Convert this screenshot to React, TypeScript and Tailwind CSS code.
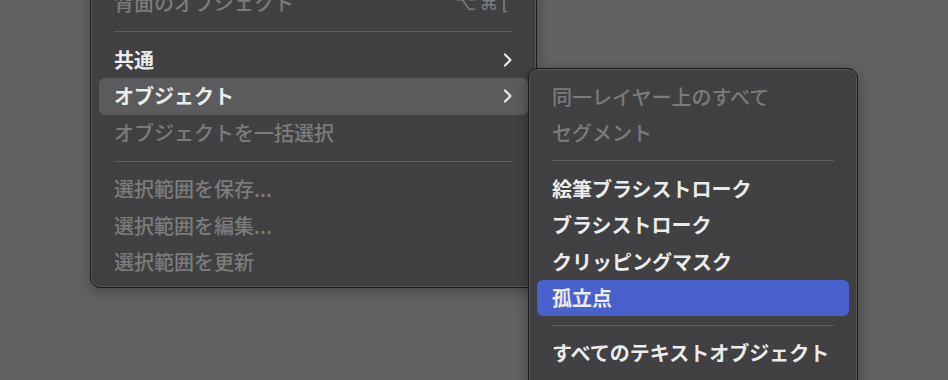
type Item =
  | { kind: "sep"; h?: string }
  | {
      kind: "item";
      label: string;
      disabled?: boolean;
      submenu?: boolean;
      shortcut?: string;
      active?: "gray" | "blue";
    };

const mainItems: Item[] = [
  { kind: "item", label: "背面のオブジェクト", disabled: true, shortcut: "⌥⌘[" },
  { kind: "sep" },
  { kind: "item", label: "共通", submenu: true },
  { kind: "item", label: "オブジェクト", submenu: true, active: "gray" },
  { kind: "item", label: "オブジェクトを一括選択", disabled: true },
  { kind: "sep" },
  { kind: "item", label: "選択範囲を保存...", disabled: true },
  { kind: "item", label: "選択範囲を編集...", disabled: true },
  { kind: "item", label: "選択範囲を更新", disabled: true },
];

const subItems: Item[] = [
  { kind: "item", label: "同一レイヤー上のすべて", disabled: true },
  { kind: "item", label: "セグメント", disabled: true },
  { kind: "sep", h: "h-[19px]" },
  { kind: "item", label: "絵筆ブラシストローク" },
  { kind: "item", label: "ブラシストローク" },
  { kind: "item", label: "クリッピングマスク" },
  { kind: "item", label: "孤立点", active: "blue" },
  { kind: "sep", h: "h-[18.5px]" },
  { kind: "item", label: "すべてのテキストオブジェクト" },
  { kind: "item", label: "ポイント文字オブジェクト" },
];

function Chevron() {
  return (
    <svg width="12" height="14" viewBox="0 0 12 14" className="shrink-0">
      <path
        d="M3 1.5 L8.5 7 L3 12.5"
        fill="none"
        stroke="#e6e6e6"
        strokeWidth="2.2"
        strokeLinecap="round"
        strokeLinejoin="round"
      />
    </svg>
  );
}

function Row({ item }: { item: Item }) {
  if (item.kind === "sep") {
    return (
      <div className={`flex items-center px-[15px] ${item.h ?? "h-[20px]"}`}>
        <div className="h-px w-full bg-[#5d5d5f]" />
      </div>
    );
  }
  const bg =
    item.active === "gray"
      ? "bg-[#5b5b5d]"
      : item.active === "blue"
        ? "bg-[#4a61cc]"
        : "";
  return (
    <div
      className={`flex h-[36.5px] items-center justify-between rounded-[6px] pl-[15px] pr-[14px] ${bg}`}
    >
      <span
        className={`whitespace-nowrap text-[20px] leading-none ${
          item.disabled ? "font-medium text-[#7b7b7c]" : "font-semibold text-[#ebebeb]"
        }`}
      >
        {item.label}
      </span>
      {item.submenu && <Chevron />}
      {item.shortcut && (
        <span className="whitespace-nowrap pr-[2px] text-[19px] leading-none tracking-[3px] text-[#7b7b7c] [font-family:'DejaVu_Sans',sans-serif]">
          {item.shortcut}
        </span>
      )}
    </div>
  );
}

export default function App() {
  return (
    <div className="relative h-[380px] w-[948px] overflow-hidden bg-[#616161] [font-family:'Noto_Sans_CJK_JP',sans-serif]">
      <div className="absolute left-[90px] top-[-21px] w-[447px] rounded-[10px] border border-[#1b1b1c] bg-[#414143] px-[8px] pb-[6.5px] pt-[5px] shadow-[inset_0_0_0_1px_rgba(255,255,255,0.12),0_4px_14px_rgba(0,0,0,0.25)]">
        {mainItems.map((it, i) => (
          <Row key={i} item={it} />
        ))}
      </div>
      <div className="absolute left-[528px] top-[68px] w-[330px] rounded-[10px] border border-[#1b1b1c] bg-[#414143] px-[8px] pt-[9.25px] pb-[8px] shadow-[inset_0_0_0_1px_rgba(255,255,255,0.12),0_4px_14px_rgba(0,0,0,0.3)]">
        {subItems.map((it, i) => (
          <Row key={i} item={it} />
        ))}
      </div>
    </div>
  );
}
